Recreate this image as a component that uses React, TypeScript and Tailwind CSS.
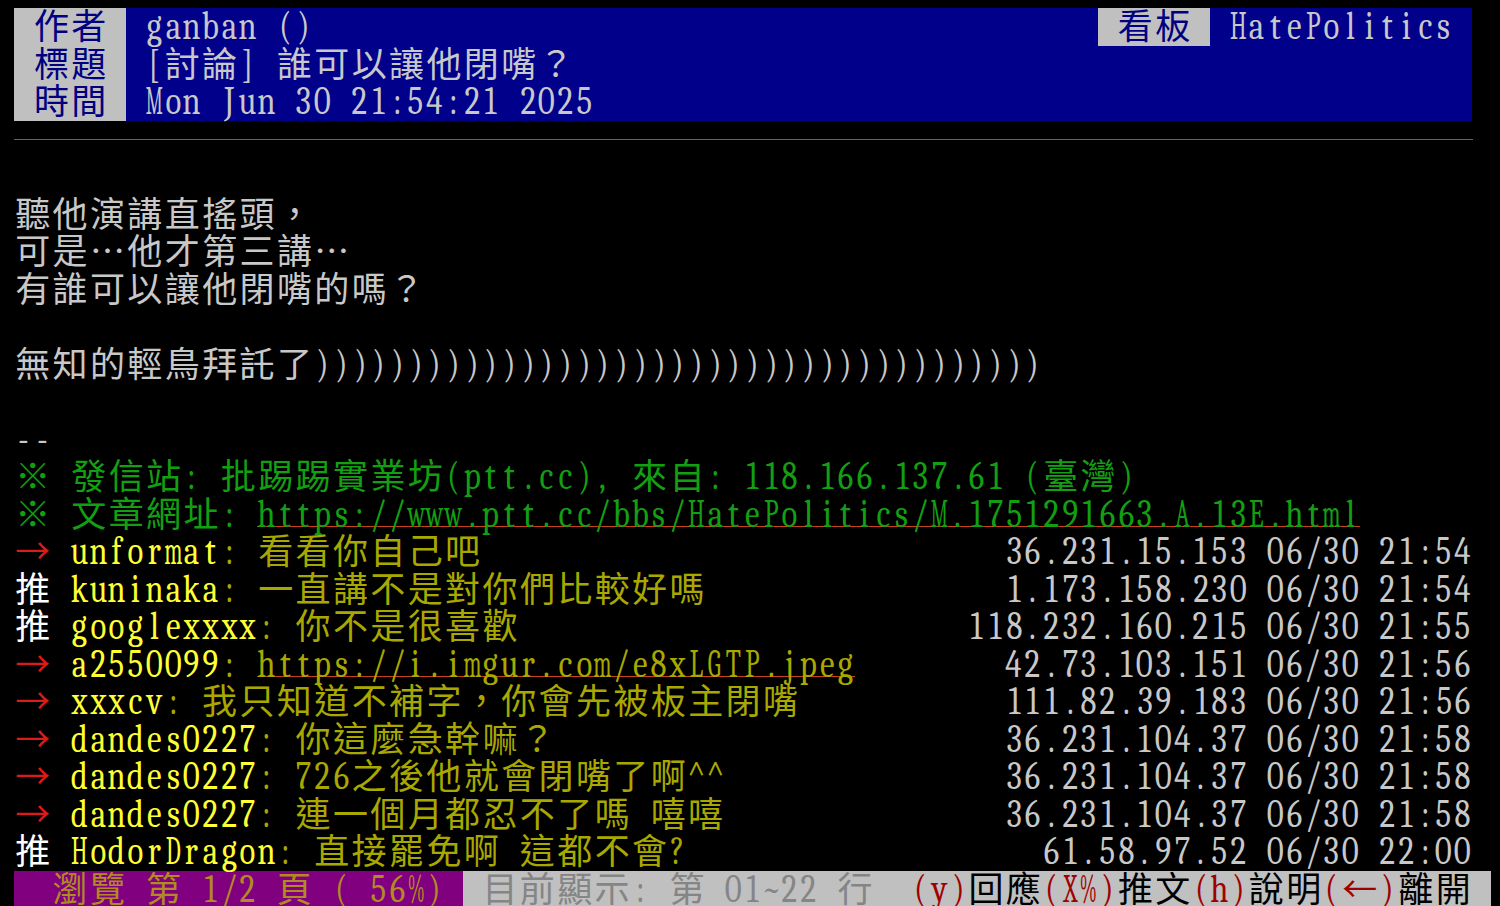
import React from 'react'
import clsx from 'clsx'

type Seg = { t: string; c?: string; bg?: string; u?: boolean }

// terminal colours
const W = 'text-[#c8c8c8]'
const BW = 'text-white'
const GR = 'text-[#12a012]'
const RD = 'text-[#dc1a1a]'
const YL = 'text-[#ffff33]'
const OL = 'text-[#a8a800]'
const NV = 'text-[#000080]'
const FT = 'text-[#b08a22]'
const DG = 'text-[#858585]'
const DR = 'text-[#a00000]'
const BK = 'text-black'
const BLUE = 'bg-[#00008b]'
const GRAY = 'bg-[#c0c0c0]'
const PURPLE = 'bg-[#800080]'

const isWide = (ch: string) => ch.charCodeAt(0) > 0x2000
const cols = (s: string) => Array.from(s).reduce((n, ch) => n + (isWide(ch) ? 2 : 1), 0)
const pad = (s: string, n: number) => s + ' '.repeat(Math.max(0, n - cols(s)))

const G2 = 'BCEFLPRSTZ+=<>~'
const G3 = 'ADGHKNOQUVXYw'
const G4 = 'm&'
const G5 = 'MW%@'

function asciiScale(ch: string) {
    if (G5.includes(ch)) return 'scale-x-[0.48]'
    if (G4.includes(ch)) return 'scale-x-[0.56]'
    if (G3.includes(ch)) return 'scale-x-[0.6]'
    if (G2.includes(ch)) return 'scale-x-[0.68]'
    return 'scale-x-[0.82]'
}

function Cell({ ch }: { ch: string }) {
    if (ch === ' ') return <span className="h-[37.5px] w-[18.7px] shrink-0" />
    if (isWide(ch))
        return (
            <span className="flex h-[37.5px] w-[37.4px] shrink-0 justify-center font-[family-name:'Noto_Sans_CJK_TC','Noto_Sans_CJK_JP',sans-serif] text-[35px] font-normal leading-[32px]">
                {ch}
            </span>
        )
    return (
        <span className="flex h-[37.5px] w-[18.7px] shrink-0 font-serif text-[40px] leading-[37px]">
            <span className={clsx('flex w-full justify-center', asciiScale(ch))}>{ch}</span>
        </span>
    )
}

function Segment({ s }: { s: Seg }) {
    return (
        <span className={clsx('flex shrink-0', s.c ?? W, s.bg, s.u ? 'h-[31px] self-start border-b border-[#c8401c]' : 'h-[37.5px]')}>
            {Array.from(s.t).map((ch, i) => (
                <Cell key={i} ch={ch} />
            ))}
        </span>
    )
}

function push(tag: '推' | '→', user: string, content: string, ip: string, link = false): Seg[] {
    const left = tag + ' ' + user + ': ' + content
    const gap = 78 - cols(left) - cols(ip)
    return [
        { t: tag + ' ', c: tag === '推' ? BW : RD },
        { t: user, c: YL },
        { t: ': ', c: OL },
        { t: content, c: OL, u: link },
        { t: ' '.repeat(gap) },
        { t: ip, c: W },
    ]
}

const rows: (Seg[] | 'line')[] = [
    [
        { t: ' 作者 ', c: NV, bg: GRAY },
        { t: pad(' ganban ()', 52), c: W, bg: BLUE },
        { t: ' 看板 ', c: NV, bg: GRAY },
        { t: ' HatePolitics ', c: W, bg: BLUE },
    ],
    [
        { t: ' 標題 ', c: NV, bg: GRAY },
        { t: pad(' [討論] 誰可以讓他閉嘴？', 72), c: W, bg: BLUE },
    ],
    [
        { t: ' 時間 ', c: NV, bg: GRAY },
        { t: pad(' Mon Jun 30 21:54:21 2025', 72), c: W, bg: BLUE },
    ],
    'line',
    [],
    [{ t: '聽他演講直搖頭，' }],
    [{ t: '可是…他才第三講…' }],
    [{ t: '有誰可以讓他閉嘴的嗎？' }],
    [],
    [{ t: '無知的輕鳥拜託了' + ')'.repeat(39) }],
    [],
    [{ t: '--' }],
    [{ t: '※ 發信站: 批踢踢實業坊(ptt.cc), 來自: 118.166.137.61 (臺灣)', c: GR }],
    [
        { t: '※ 文章網址: ', c: GR },
        { t: 'https://www.ptt.cc/bbs/HatePolitics/M.1751291663.A.13E.html', c: GR, u: true },
    ],
    push('→', 'unformat', '看看你自己吧', '36.231.15.153 06/30 21:54'),
    push('推', 'kuninaka', '一直講不是對你們比較好嗎', '1.173.158.230 06/30 21:54'),
    push('推', 'googlexxxx', '你不是很喜歡', '118.232.160.215 06/30 21:55'),
    push('→', 'a2550099', 'https://i.imgur.com/e8xLGTP.jpeg', '42.73.103.151 06/30 21:56', true),
    push('→', 'xxxcv', '我只知道不補字，你會先被板主閉嘴', '111.82.39.183 06/30 21:56'),
    push('→', 'dandes0227', '你這麼急幹嘛？', '36.231.104.37 06/30 21:58'),
    push('→', 'dandes0227', '726之後他就會閉嘴了啊^^', '36.231.104.37 06/30 21:58'),
    push('→', 'dandes0227', '連一個月都忍不了嗎 嘻嘻', '36.231.104.37 06/30 21:58'),
    push('推', 'HodorDragon', '直接罷免啊 這都不會?', '61.58.97.52 06/30 22:00'),
    [
        { t: '  瀏覽 第 1/2 頁 ( 56%) ', c: FT, bg: PURPLE },
        { t: ' 目前顯示: 第 01~22 行  ', c: DG, bg: GRAY },
        { t: '(y)', c: DR, bg: GRAY },
        { t: '回應', c: BK, bg: GRAY },
        { t: '(X%)', c: DR, bg: GRAY },
        { t: '推文', c: BK, bg: GRAY },
        { t: '(h)', c: DR, bg: GRAY },
        { t: '說明', c: BK, bg: GRAY },
        { t: '(←)', c: DR, bg: GRAY },
        { t: '離開 ', c: BK, bg: GRAY },
    ],
]

export default function App() {
    return (
        <div className="h-screen w-full overflow-hidden bg-black pl-[14px] pt-[8px]">
            {rows.map((r, i) =>
                r === 'line' ? (
                    <div key={i} className="flex h-[37.5px] items-center">
                        <div className="h-px w-[1459px] bg-[#0a8a78]" />
                    </div>
                ) : (
                    <div key={i} className="flex h-[37.5px]">
                        {r.map((s, j) => (
                            <Segment key={j} s={s} />
                        ))}
                    </div>
                )
            )}
        </div>
    )
}
